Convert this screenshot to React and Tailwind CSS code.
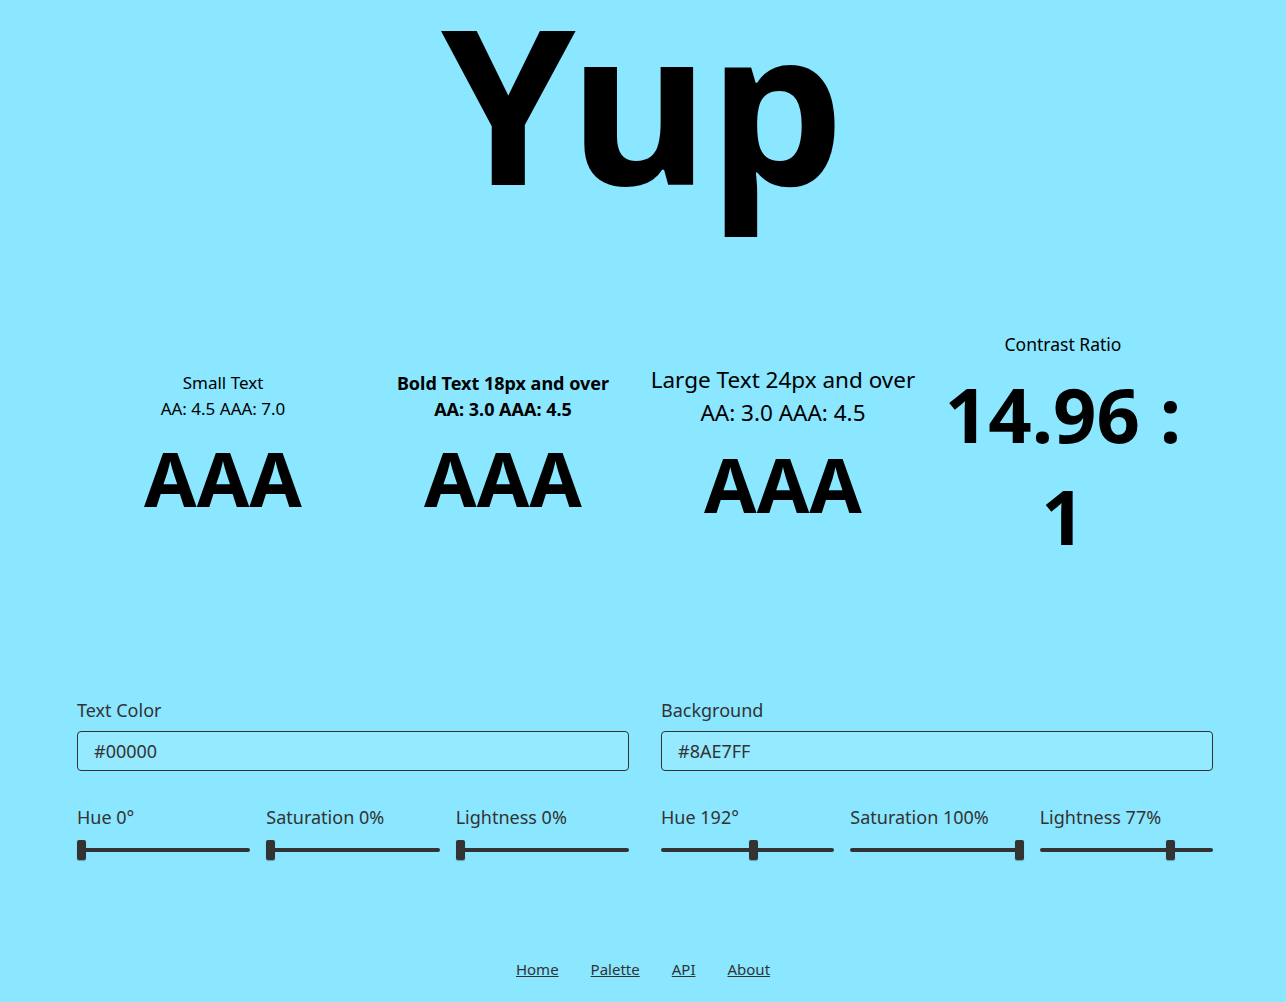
import React from "react";

const Slider = ({ label, value }) => (
  <div className="flex-1 flex flex-col">
    <span className="text-[18px] leading-[24px] text-[#333]">{label}</span>
    <div className="relative mt-[11px] h-[20px] flex items-center">
      <div className="w-full h-[4px] rounded-full bg-[#333]" />
      <div
        className="absolute top-0 h-[20px] w-[9px] rounded-[2px] bg-[#333] shadow-[0_1px_1px_rgba(0,0,0,0.3)]"
        style={{ left: `calc(${value} * (100% - 9px))` }}
      />
    </div>
  </div>
);

const ColorPanel = ({ title, hex, sliders }) => (
  <div className="flex-1 flex flex-col">
    <label className="text-[18px] leading-[24px] text-[#333]">{title}</label>
    <input
      readOnly
      value={hex}
      className="mt-[9px] h-[40px] w-full rounded-[4px] border border-[#333] bg-[#95EAFF] px-4 text-[18px] text-[#333] outline-none"
    />
    <div className="mt-[34px] flex gap-4">
      {sliders.map((s) => (
        <Slider key={s.label} label={s.label} value={s.value} />
      ))}
    </div>
  </div>
);

const App = () => {
  return (
    <div className="min-h-screen bg-[#8AE7FF] text-black" style={{ fontFamily: '"Noto Sans", "Open Sans", sans-serif' }}>
      <h1 className="text-center text-[215px] leading-[203px] font-bold">Yup</h1>

      <div className="mt-[129px] w-[1120px] mx-auto grid grid-cols-4 items-center text-center">
        <div className="flex flex-col">
          <p className="text-[17px] leading-[26px]">Small Text</p>
          <p className="text-[17px] leading-[26px]">AA: 4.5 AAA: 7.0</p>
          <p className="mt-[4px] text-[76px] leading-[104px] font-bold">AAA</p>
        </div>
        <div className="flex flex-col">
          <p className="text-[18px] leading-[26px] font-bold">Bold Text 18px and over</p>
          <p className="text-[18px] leading-[26px] font-bold">AA: 3.0 AAA: 4.5</p>
          <p className="mt-[4px] text-[76px] leading-[104px] font-bold">AAA</p>
        </div>
        <div className="flex flex-col">
          <p className="text-[22.5px] leading-[33px]">Large Text 24px and over</p>
          <p className="text-[22.5px] leading-[33px]">AA: 3.0 AAA: 4.5</p>
          <p className="mt-[3px] text-[76px] leading-[104px] font-bold">AAA</p>
        </div>
        <div className="flex flex-col">
          <p className="text-[17.5px] leading-[24px]">Contrast Ratio</p>
          <p className="mt-[7px] text-[76px] leading-[102px] font-bold">14.96 : 1</p>
        </div>
      </div>

      <div className="mt-[131px] w-[1136px] ml-[77px] flex gap-8">
        <ColorPanel
          title="Text Color"
          hex="#00000"
          sliders={[
            { label: "Hue 0°", value: 0 },
            { label: "Saturation 0%", value: 0 },
            { label: "Lightness 0%", value: 0 },
          ]}
        />
        <ColorPanel
          title="Background"
          hex="#8AE7FF"
          sliders={[
            { label: "Hue 192°", value: 0.533 },
            { label: "Saturation 100%", value: 1 },
            { label: "Lightness 77%", value: 0.77 },
          ]}
        />
      </div>

      <nav className="mt-[97px] pb-[21px] flex justify-center gap-8 text-[15px] leading-[24px] text-[#333]">
        <a href="#" className="underline">Home</a>
        <a href="#" className="underline">Palette</a>
        <a href="#" className="underline">API</a>
        <a href="#" className="underline">About</a>
      </nav>
    </div>
  );
};

export default App;
